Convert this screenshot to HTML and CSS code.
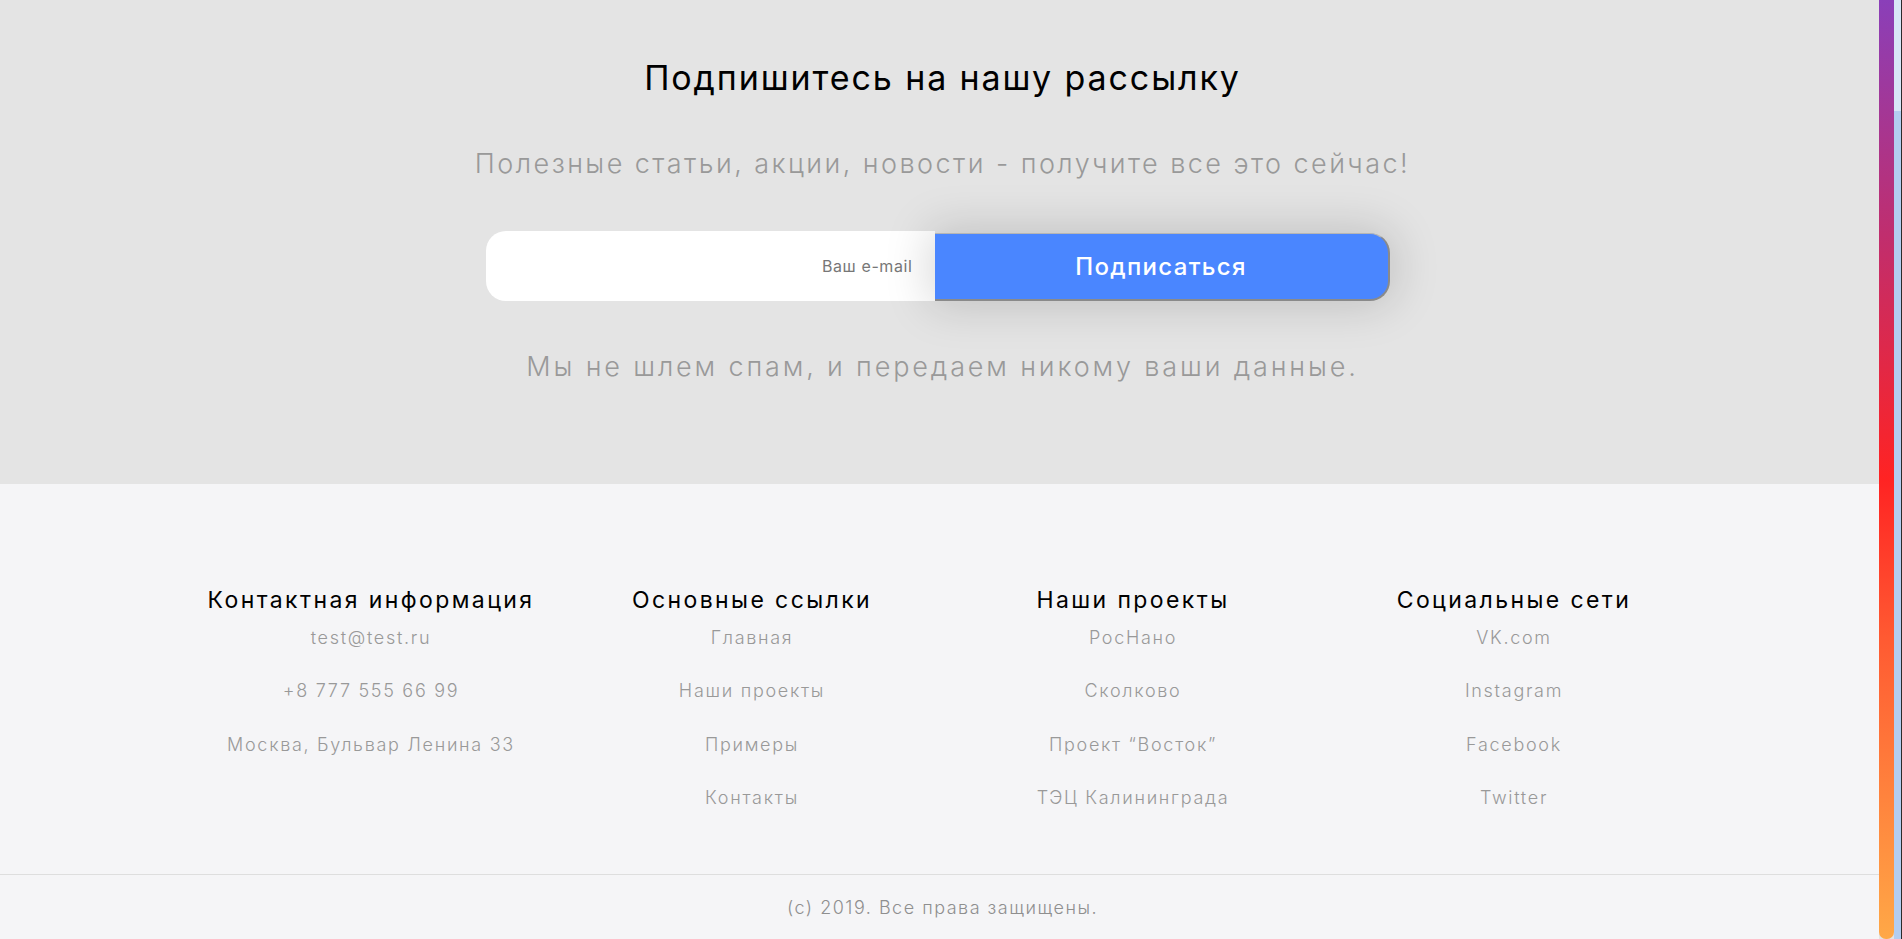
FILE: index.html
```html
<!DOCTYPE html>
<html lang="ru">
<head>
<meta charset="utf-8">
<title>Подписка</title>
<link rel="stylesheet" href="styles.css">
</head>
<body>
<div class="page">
  <main class="main">
    <section class="subscribe">
      <h2 class="subscribe-title">Подпишитесь на нашу рассылку</h2>
      <p class="subscribe-sub">Полезные статьи, акции, новости - получите все это сейчас!</p>
      <form class="subscribe-form">
        <input class="subscribe-input" type="email" placeholder="Ваш e-mail">
        <button class="subscribe-btn" type="button">Подписаться</button>
      </form>
      <p class="subscribe-note">Мы не шлем спам, и передаем никому ваши данные.</p>
    </section>
    <footer class="footer">
      <div class="footer-cols">
        <div class="footer-col">
          <h3 class="footer-head">Контактная информация</h3>
          <a class="footer-link">test@test.ru</a>
          <a class="footer-link">+8 777 555 66 99</a>
          <a class="footer-link">Москва, Бульвар Ленина 33</a>
        </div>
        <div class="footer-col">
          <h3 class="footer-head">Основные ссылки</h3>
          <a class="footer-link">Главная</a>
          <a class="footer-link">Наши проекты</a>
          <a class="footer-link">Примеры</a>
          <a class="footer-link">Контакты</a>
        </div>
        <div class="footer-col">
          <h3 class="footer-head">Наши проекты</h3>
          <a class="footer-link">РосНано</a>
          <a class="footer-link">Сколково</a>
          <a class="footer-link">Проект “Восток”</a>
          <a class="footer-link">ТЭЦ Калининграда</a>
        </div>
        <div class="footer-col">
          <h3 class="footer-head">Социальные сети</h3>
          <a class="footer-link">VK.com</a>
          <a class="footer-link">Instagram</a>
          <a class="footer-link">Facebook</a>
          <a class="footer-link">Twitter</a>
        </div>
      </div>
      <div class="footer-bottom">(c) 2019. Все права защищены.</div>
    </footer>
  </main>
  <div class="scrollbar">
    <div class="scrollbar-thumb"></div>
    <div class="scrollbar-track"></div>
    <div class="scrollbar-edge"></div>
  </div>
</div>
</body>
</html>
```

FILE: styles.css
```css
* { box-sizing: border-box; }
html, body { margin: 0; padding: 0; height: 100%; overflow: hidden; }
body {
  font-family: Inter, "Noto Sans", "DejaVu Sans", sans-serif;
  color: #000;
}
.page {
  display: flex;
  height: 939px;
}
.main {
  flex: 1;
  display: flex;
  flex-direction: column;
  min-width: 0;
}
.subscribe {
  background: #e4e4e4;
  height: 484px;
  padding: 58px 0 0 6px;
  display: flex;
  flex-direction: column;
  align-items: center;
}
.subscribe-title {
  margin: 0;
  font-size: 34px;
  line-height: 40px;
  font-weight: 400;
  letter-spacing: 1.9px;
  color: #000;
}
.subscribe-sub {
  margin: 50px 0 0;
  font-size: 27px;
  line-height: 32px;
  font-weight: 300;
  letter-spacing: 2.45px;
  color: #999;
}
.subscribe-form {
  margin: 51px 0 0 -10px;
  display: flex;
  align-items: center;
  height: 70px;
}
.subscribe-input {
  width: 449px;
  height: 70px;
  border: none;
  border-radius: 20px 0 0 20px;
  background: #fff;
  padding: 0 22px;
  text-align: right;
  font-family: inherit;
  font-size: 16px;
  letter-spacing: 0.6px;
  outline: none;
}
.subscribe-input::placeholder { color: #777; }
.subscribe-btn {
  position: relative;
  z-index: 1;
  width: 455px;
  height: 68px;
  margin-top: 1px;
  border: none;
  border-top: 1px solid #b5b5b5;
  border-right: 2px solid #8a8a8a;
  border-bottom: 2px solid #8a8a8a;
  border-radius: 0 20px 20px 0;
  background: #4a86ff;
  color: #fff;
  font-family: inherit;
  font-size: 24px;
  font-weight: 500;
  letter-spacing: 1.3px;
  box-shadow: 0 0 45px 6px rgba(0, 0, 0, 0.15);
  cursor: pointer;
}
.subscribe-note {
  margin: 50px 0 0;
  font-size: 27px;
  line-height: 32px;
  font-weight: 300;
  letter-spacing: 2.85px;
  color: #999;
}
.footer {
  flex: 1;
  background: #f5f5f7;
  display: flex;
  flex-direction: column;
}
.footer-cols {
  display: grid;
  grid-template-columns: repeat(4, 381px);
  justify-content: center;
  padding: 102px 0 0 6px;
  height: 391px;
  border-bottom: 1px solid #dedede;
}
.footer-col {
  display: flex;
  flex-direction: column;
  align-items: center;
}
.footer-head {
  margin: 0 0 12px;
  font-size: 23px;
  line-height: 28px;
  font-weight: 400;
  letter-spacing: 2.4px;
  color: #000;
}
.footer-link {
  font-size: 18px;
  line-height: 24px;
  font-weight: 300;
  letter-spacing: 1.7px;
  color: #999;
  margin-bottom: 29.3px;
}
.footer-bottom {
  flex: 1;
  display: flex;
  align-items: center;
  justify-content: center;
  padding-left: 6px;
  font-size: 18px;
  font-weight: 300;
  letter-spacing: 1.5px;
  color: #8f8f8f;
}
.scrollbar {
  width: 23px;
  display: flex;
  background: #e4e4e4;
}
.scrollbar-thumb {
  width: 15px;
  height: 100%;
  border-radius: 0 0 7px 7px;
  background: linear-gradient(180deg, #8a3fb9 0%, #c02e6e 25%, #ff2323 51%, #ff5a32 68%, #ffa847 100%);
}
.scrollbar-track {
  width: 7px;
  height: 100%;
  background: linear-gradient(180deg, #d8e6f7 0, #d8e6f7 111px, #b3cdf0 111px, #b3cdf0 100%);
}
.scrollbar-edge {
  width: 1px;
  height: 100%;
  background: #2b2b2b;
}
```
